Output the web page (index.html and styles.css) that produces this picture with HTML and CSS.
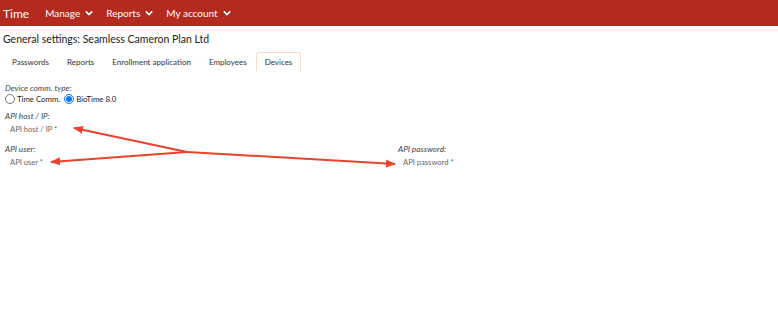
FILE: index.html
```html
<!DOCTYPE html>
<html lang="en">
<head>
    <meta charset="UTF-8">
    <meta name="viewport" content="width=device-width, initial-scale=1.0">
    <title>General settings</title>
    <link rel="stylesheet" href="styles.css">
</head>
<body>
    <header class="topbar">
        <span class="brand">Time</span>
        <nav class="menu">
            <span class="menu-item">Manage <svg class="chev" viewBox="0 0 10 6"><path d="M1 1l4 4 4-4"/></svg></span>
            <span class="menu-item">Reports <svg class="chev" viewBox="0 0 10 6"><path d="M1 1l4 4 4-4"/></svg></span>
            <span class="menu-item">My account <svg class="chev" viewBox="0 0 10 6"><path d="M1 1l4 4 4-4"/></svg></span>
        </nav>
    </header>

    <main class="page">
        <h1 class="title">General settings: Seamless Cameron Plan Ltd</h1>

        <ul class="tabs">
            <li class="tab">Passwords</li>
            <li class="tab">Reports</li>
            <li class="tab">Enrollment application</li>
            <li class="tab">Employees</li>
            <li class="tab active">Devices</li>
        </ul>

        <section class="form">
            <div class="field">
                <label class="field-label">Device comm. type:</label>
                <div class="radios">
                    <label class="radio"><input type="radio" name="comm"> Time Comm.</label>
                    <label class="radio"><input type="radio" name="comm" checked> BioTime 8.0</label>
                </div>
            </div>
            <div class="field">
                <label class="field-label">API host / IP:</label>
                <input class="text-input" type="text" placeholder="API host / IP *">
            </div>
            <div class="row">
                <div class="field">
                    <label class="field-label">API user:</label>
                    <input class="text-input" type="text" placeholder="API user *">
                </div>
                <div class="field">
                    <label class="field-label">API password:</label>
                    <input class="text-input" type="password" placeholder="API password *">
                </div>
            </div>
        </section>
    </main>

    <svg class="arrows" width="778" height="334" viewBox="0 0 778 334">
        <defs>
            <marker id="head" markerWidth="10" markerHeight="8" refX="9" refY="4" orient="auto" markerUnits="userSpaceOnUse" viewBox="0 0 10 8">
                <path d="M0 0L10 4L0 8z" fill="#e8432d"/>
            </marker>
        </defs>
        <g stroke="#e8432d" stroke-width="2" fill="none">
            <line x1="187" y1="152" x2="74" y2="128" marker-end="url(#head)"/>
            <line x1="187" y1="152" x2="51" y2="162" marker-end="url(#head)"/>
            <line x1="187" y1="152" x2="395" y2="164" marker-end="url(#head)"/>
        </g>
    </svg>
</body>
</html>
```

FILE: styles.css
```css
body {
    margin: 0;
    font-family: Lato, "Open Sans", sans-serif;
    color: #333;
    background: #fff;
}
.topbar {
    display: flex;
    align-items: center;
    height: 26px;
    background-color: #b42a1f;
    color: white;
    padding-left: 3px;
}
.brand {
    font-size: 12px;
    margin-right: 16px;
}
.menu {
    display: flex;
    gap: 13px;
}
.menu-item {
    display: flex;
    align-items: center;
    gap: 5px;
    font-size: 10px;
}
.chev {
    width: 8px;
    height: 6px;
    fill: none;
    stroke: white;
    stroke-width: 2;
}
.page {
    padding: 0 3px;
}
.title {
    font-size: 10.5px;
    line-height: 13px;
    font-weight: normal;
    color: #222;
    margin: 7px 0 6px;
}
.tabs {
    display: flex;
    list-style: none;
    margin: 0;
    padding: 0;
}
.tab {
    font-size: 8px;
    line-height: 10px;
    color: #333;
    padding: 4px 8px;
    border: 1px solid transparent;
    border-bottom: none;
    border-radius: 3px 3px 0 0;
}
.active {
    border-color: #f6dcc7;
}
.form {
    padding: 12px 2px 0;
}
.field {
    display: flex;
    flex-direction: column;
    margin-bottom: 7px;
}
.field:first-child {
    margin-bottom: 6px;
}
.field-label {
    font-size: 8.2px;
    line-height: 10px;
    font-style: italic;
    color: #444;
}
.radios {
    display: flex;
    align-items: center;
    height: 12px;
    gap: 4px;
    font-size: 7.8px;
    color: #222;
}
.radio {
    display: flex;
    align-items: center;
    gap: 2px;
}
.radio input {
    width: 10px;
    height: 10px;
    margin: 0;
}
.text-input {
    border: none;
    outline: none;
    font-family: inherit;
    font-size: 7.6px;
    height: 16px;
    padding: 0 5px;
    width: 200px;
}
.text-input::placeholder {
    color: #666;
}
.row {
    display: grid;
    grid-template-columns: 393px 1fr;
}
.arrows {
    position: absolute;
    left: 0;
    top: 0;
    pointer-events: none;
}
```
